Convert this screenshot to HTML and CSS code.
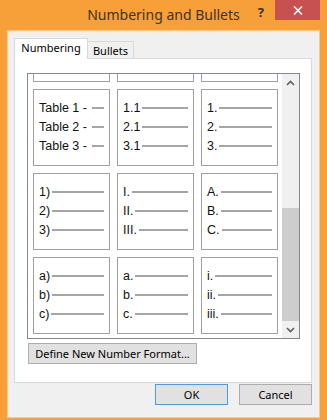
FILE: index.html
```html
<!DOCTYPE html>
<html lang="en">
  <head>
    <meta charset="UTF-8" />
    <meta name="viewport" content="width=device-width, initial-scale=1.0" />
    <title>Numbering and Bullets</title>
    <link rel="stylesheet" href="styles.css">
  </head>
  <body>
    <div class="window">
      <div class="titlebar">
        <div class="title">Numbering and Bullets</div>
        <div class="controls">
          <span class="help">?</span>
          <span class="close">
            <svg width="10" height="9" viewBox="0 0 10 9">
              <path d="M1 0.5 L9 8.5 M9 0.5 L1 8.5" stroke="#fff" stroke-width="1.6" fill="none" />
            </svg>
          </span>
        </div>
      </div>

      <div class="client">
        <div class="tabs">
          <div class="tab tab-active">Numbering</div>
          <div class="tab tab-inactive">Bullets</div>
        </div>

        <div class="panel">
          <div class="listbox">
            <div class="gallery">
              <div class="grid">
                <div class="cell"></div>
                <div class="cell"></div>
                <div class="cell"></div>

                <div class="cell">
                  <div class="item"><span>Table 1 - </span><i class="rule"></i></div>
                  <div class="item"><span>Table 2 - </span><i class="rule"></i></div>
                  <div class="item"><span>Table 3 - </span><i class="rule"></i></div>
                </div>
                <div class="cell">
                  <div class="item"><span>1.1</span><i class="rule"></i></div>
                  <div class="item"><span>2.1</span><i class="rule"></i></div>
                  <div class="item"><span>3.1</span><i class="rule"></i></div>
                </div>
                <div class="cell">
                  <div class="item"><span>1.</span><i class="rule"></i></div>
                  <div class="item"><span>2.</span><i class="rule"></i></div>
                  <div class="item"><span>3.</span><i class="rule"></i></div>
                </div>

                <div class="cell">
                  <div class="item"><span>1)</span><i class="rule"></i></div>
                  <div class="item"><span>2)</span><i class="rule"></i></div>
                  <div class="item"><span>3)</span><i class="rule"></i></div>
                </div>
                <div class="cell">
                  <div class="item"><span>I.</span><i class="rule"></i></div>
                  <div class="item"><span>II.</span><i class="rule"></i></div>
                  <div class="item"><span>III.</span><i class="rule"></i></div>
                </div>
                <div class="cell">
                  <div class="item"><span>A.</span><i class="rule"></i></div>
                  <div class="item"><span>B.</span><i class="rule"></i></div>
                  <div class="item"><span>C.</span><i class="rule"></i></div>
                </div>

                <div class="cell">
                  <div class="item"><span>a)</span><i class="rule"></i></div>
                  <div class="item"><span>b)</span><i class="rule"></i></div>
                  <div class="item"><span>c)</span><i class="rule"></i></div>
                </div>
                <div class="cell">
                  <div class="item"><span>a.</span><i class="rule"></i></div>
                  <div class="item"><span>b.</span><i class="rule"></i></div>
                  <div class="item"><span>c.</span><i class="rule"></i></div>
                </div>
                <div class="cell">
                  <div class="item"><span>i.</span><i class="rule"></i></div>
                  <div class="item"><span>ii.</span><i class="rule"></i></div>
                  <div class="item"><span>iii.</span><i class="rule"></i></div>
                </div>
              </div>
            </div>

            <div class="scrollbar">
              <div class="arrow">
                <svg width="9" height="6" viewBox="0 0 9 6">
                  <polyline points="1,5 4.5,1.5 8,5" stroke="#606060" stroke-width="1.7" fill="none" />
                </svg>
              </div>
              <div class="track"><div class="thumb"></div></div>
              <div class="arrow">
                <svg width="9" height="6" viewBox="0 0 9 6">
                  <polyline points="1,1 4.5,4.5 8,1" stroke="#606060" stroke-width="1.7" fill="none" />
                </svg>
              </div>
            </div>
          </div>

          <button class="btn btn-define">Define New Number Format...</button>
        </div>

        <div class="footer">
          <button class="btn btn-default">OK</button>
          <button class="btn">Cancel</button>
        </div>
      </div>
    </div>
  </body>
</html>
```

FILE: styles.css
```css
body {
  margin: 0;
  font-family: "Noto Sans", sans-serif;
  font-size: 11px;
  color: #000;
}
.window {
  width: 327px;
  height: 420px;
  background: #f7a03a;
  display: flex;
  flex-direction: column;
}
.titlebar {
  height: 30px;
  display: grid;
  grid-template-columns: 1fr auto 1fr;
}
.title {
  grid-column: 2;
  font-size: 14px;
  line-height: 30px;
  color: #3d3428;
}
.controls {
  grid-column: 3;
  justify-self: end;
  display: flex;
  align-items: flex-start;
  margin-right: 7px;
}
.help {
  font-weight: bold;
  font-size: 13px;
  line-height: 14px;
  color: #3a2e1c;
  margin: 5px 11px 0 0;
}
.close {
  width: 45px;
  height: 20px;
  background: #c75050;
  display: flex;
  align-items: center;
  justify-content: center;
}
.client {
  margin: 0 7px;
  height: 388px;
  box-sizing: border-box;
  border: 1px solid #f9c98e;
  background: #f0f0f0;
  padding: 7px 0 0 6px;
}
.tabs {
  display: flex;
  align-items: flex-end;
  height: 21px;
  margin-bottom: -1px;
  position: relative;
  z-index: 1;
}
.tab {
  box-sizing: border-box;
  border: 1px solid #d9d9d9;
  border-bottom: none;
  text-align: center;
}
.tab-active {
  width: 74px;
  height: 21px;
  line-height: 18px;
  background: #fff;
}
.tab-inactive {
  width: 47px;
  height: 17px;
  line-height: 17px;
  margin: 0 0 1px -1px;
  background: #f0f0f0;
}
.panel {
  box-sizing: border-box;
  width: 298px;
  height: 325px;
  background: #fff;
  border: 1px solid #d9d9d9;
  padding: 14px 0 0 12px;
}
.listbox {
  display: flex;
  width: 273px;
  height: 266px;
  box-sizing: border-box;
  border: 1px solid #828790;
}
.gallery {
  width: 254px;
  overflow: hidden;
}
.grid {
  display: grid;
  grid-template-columns: repeat(3, 77px);
  grid-auto-rows: 77px;
  gap: 7px;
  padding-left: 5px;
  margin-top: -69px;
}
.cell {
  box-sizing: border-box;
  border: 1px solid #a0a0a0;
  padding: 8px 5px 0 5px;
  font-family: "Liberation Sans", Arial, sans-serif;
  font-size: 12.5px;
  color: #111;
}
.item {
  display: flex;
  align-items: center;
  height: 19px;
}
.item span {
  white-space: pre;
}
.rule {
  flex: 1;
  height: 2px;
  margin: 1px 0 0 2px;
  background: #a5a5a5;
}
.scrollbar {
  width: 17px;
  display: flex;
  flex-direction: column;
  background: #f0f0f0;
}
.arrow {
  height: 17px;
  display: flex;
  align-items: center;
  justify-content: center;
}
.track {
  flex: 1;
  display: flex;
  flex-direction: column;
  justify-content: flex-end;
}
.thumb {
  height: 113px;
  background: #cdcdcd;
}
.btn {
  box-sizing: border-box;
  height: 21px;
  padding: 0;
  font-family: "Noto Sans", sans-serif;
  font-size: 11px;
  white-space: nowrap;
  color: #000;
  background: #e1e1e1;
  border: 1px solid #adadad;
}
.btn-define {
  width: 169px;
  margin: 4px 0 0 1px;
}
.footer {
  display: flex;
  justify-content: flex-end;
  gap: 11px;
  margin-top: 1px;
  padding-right: 7px;
}
.footer .btn {
  width: 73px;
}
.btn-default {
  border-color: #4a9be0;
}
```
